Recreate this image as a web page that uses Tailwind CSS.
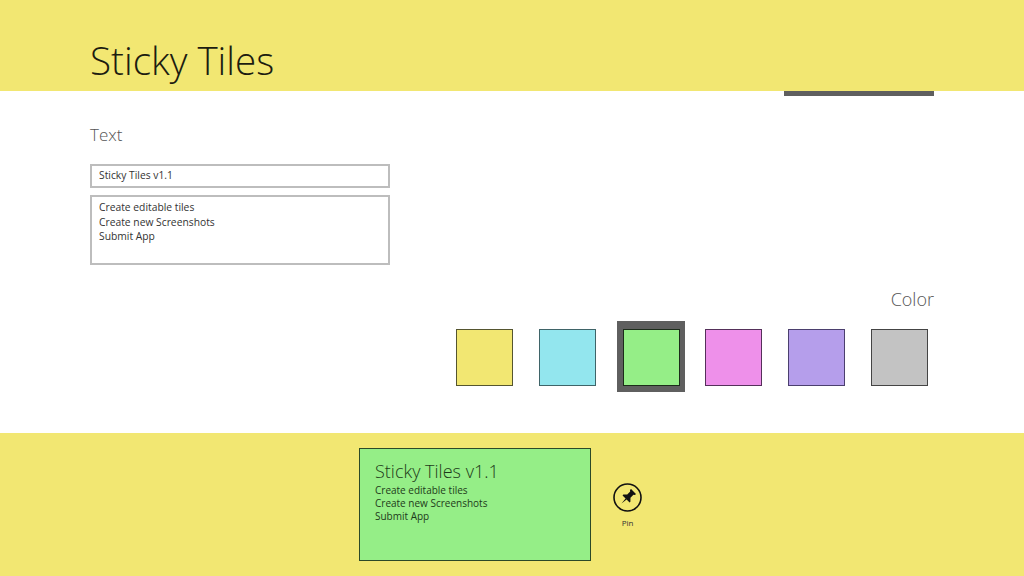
<!DOCTYPE html>
<html lang="en">
<head>
    <meta charset="UTF-8">
    <meta name="viewport" content="width=device-width, initial-scale=1.0">
    <title>Sticky Tiles</title>
    <script src="https://cdn.jsdelivr.net/npm/@tailwindcss/browser@4"></script>
</head>
<body class="w-[1024px] h-[576px] overflow-hidden bg-white font-['Open_Sans',sans-serif] text-[#222]">

    <!-- header -->
    <header class="h-[91px] bg-[#f2e772] pl-[90px] pt-[32px]">
        <h1 class="text-[38.6px] leading-[56px] font-light h-[56px] text-[#1c1c10]">Sticky Tiles</h1>
    </header>

    <!-- editor -->
    <main class="h-[342px] flex flex-col">
        <div class="h-[5px] w-[150px] ml-[784px] bg-[#5f5f5f]"></div>

        <div class="pl-[90px] pt-[26px]">
            <h2 class="text-[17px] leading-[26px] font-light text-[#555]">Text</h2>
            <input type="text" value="Sticky Tiles v1.1" class="block mt-[16px] w-[300px] h-[24px] border-2 border-[#bdbdbd] px-[7px] pb-[2px] text-[10.3px] text-[#333] outline-none">
            <textarea class="block mt-[7px] w-[300px] h-[70px] border-2 border-[#bdbdbd] px-[7px] pt-[3px] text-[10.3px] leading-[14.6px] text-[#333] outline-none resize-none">Create editable tiles
Create new Screenshots
Submit App</textarea>
        </div>

        <div class="flex flex-col items-end pr-[90px] mt-[21px]">
            <h2 class="text-[18px] leading-[26px] font-light text-[#555]">Color</h2>
            <div class="flex items-start mt-[9px] mr-[6px]">
                <div class="w-[57px] h-[57px] mt-[8px] bg-[#f2e772] border border-[#55552f]"></div>
                <div class="w-[57px] h-[57px] mt-[8px] ml-[26px] bg-[#93e6ee] border border-[#3f6468]"></div>
                <div class="w-[68px] h-[71px] ml-[21px] bg-[#5f5f5f] flex items-start pl-[6px] pt-[8px]">
                    <div class="w-[57px] h-[57px] bg-[#95ee87] border border-[#1c2c1a]"></div>
                </div>
                <div class="w-[57px] h-[57px] mt-[8px] ml-[20px] bg-[#ee90ea] border border-[#55305a]"></div>
                <div class="w-[57px] h-[57px] mt-[8px] ml-[26px] bg-[#b59eeb] border border-[#4b3f6e]"></div>
                <div class="w-[57px] h-[57px] mt-[8px] ml-[26px] bg-[#c3c3c3] border border-[#444]"></div>
            </div>
        </div>
    </main>

    <!-- preview bar -->
    <footer class="h-[143px] bg-[#f2e772] pl-[359px] pt-[15px] flex items-start">
        <div class="w-[232px] h-[113px] bg-[#95ee87] border border-[#2c4a28] pl-[15px] pt-[9px] text-[#1e3b1a]">
            <div class="text-[18px] leading-[26px] font-light">Sticky Tiles v1.1</div>
            <div class="text-[10px] leading-[13px]">Create editable tiles<br>Create new Screenshots<br>Submit App</div>
        </div>
        <div class="ml-[22px] mt-[35px] w-[29px] flex flex-col items-center">
            <svg width="29" height="29" viewBox="0 0 29 29">
                <circle cx="14.5" cy="14.5" r="13.5" fill="none" stroke="#111" stroke-width="1.6"/>
                <g transform="rotate(45 14.5 14.5)" fill="#111">
                    <path d="M11 6h7v1.500l-1.200 .9v4.200l2.700 2.800v1.100h-4.300l-.7 6.500-.7-6.500h-4.300v-1.100l2.700-2.800V8.400L11 7.500z"/>
                </g>
            </svg>
            <span class="mt-[6px] text-[8px] leading-[10px] text-[#333]">Pin</span>
        </div>
    </footer>
</body>
</html>
